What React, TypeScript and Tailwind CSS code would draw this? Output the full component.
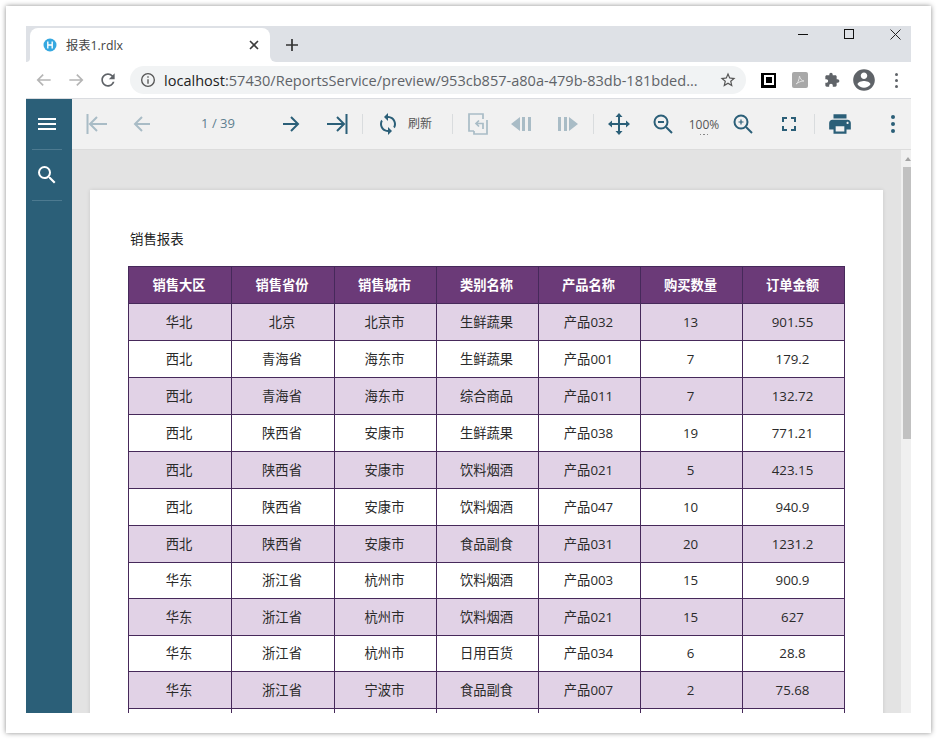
import React from "react";

const FONT = "font-['Open_Sans','Noto_Sans_CJK_SC',sans-serif]";

const head = ["销售大区", "销售省份", "销售城市", "类别名称", "产品名称", "购买数量", "订单金额"];
const rows: string[][] = [
  ["华北", "北京", "北京市", "生鲜蔬果", "产品032", "13", "901.55"],
  ["西北", "青海省", "海东市", "生鲜蔬果", "产品001", "7", "179.2"],
  ["西北", "青海省", "海东市", "综合商品", "产品011", "7", "132.72"],
  ["西北", "陕西省", "安康市", "生鲜蔬果", "产品038", "19", "771.21"],
  ["西北", "陕西省", "安康市", "饮料烟酒", "产品021", "5", "423.15"],
  ["西北", "陕西省", "安康市", "饮料烟酒", "产品047", "10", "940.9"],
  ["西北", "陕西省", "安康市", "食品副食", "产品031", "20", "1231.2"],
  ["华东", "浙江省", "杭州市", "饮料烟酒", "产品003", "15", "900.9"],
  ["华东", "浙江省", "杭州市", "饮料烟酒", "产品021", "15", "627"],
  ["华东", "浙江省", "杭州市", "日用百货", "产品034", "6", "28.8"],
  ["华东", "浙江省", "宁波市", "食品副食", "产品007", "2", "75.68"],
  ["", "", "", "", "", "", ""],
];
const short = [7, 9];

const Sep = () => <div className="w-px h-[20px] bg-[#d9dcde] shrink-0" />;
const Item = ({ className, children }: { className: string; children?: React.ReactNode }) => (
  <div className={`h-full flex items-center justify-center shrink-0 ${className}`}>{children}</div>
);
const Ln = ({ c, w = 2, d, s = 24 }: { c: string; w?: number; d: string; s?: number }) => (
  <svg width={s} height={s} viewBox="0 0 24 24" fill="none" stroke={c} strokeWidth={w}><path d={d} /></svg>
);
const Fl = ({ c, d, s = 24 }: { c: string; d: string; s?: number }) => (
  <svg width={s} height={s} viewBox="0 0 24 24" fill={c}><path d={d} /></svg>
);

const ON = "#2b5f78";
const OFF = "#a9bcc6";

export default function App() {
  return (
    <div className={`w-[937px] h-[739px] bg-white overflow-hidden pt-[6px] pl-[6px] ${FONT}`}>
      <div className="w-[925px] h-[727px] bg-white shadow-[0_0_5px_rgba(0,0,0,0.45)] p-[20px]">
        <div className="w-[885px] h-[687px] flex flex-col overflow-hidden">
          {/* tab strip */}
          <div className="h-[36px] bg-[#dee1e6] flex shrink-0">
            <div className="relative ml-[4px] mt-[2px] w-[240px] h-[34px] bg-white rounded-t-[8px] flex items-center pl-[13px] pr-[11px]">
              <div className="absolute left-[-4px] bottom-0 w-[4px] h-[6px] bg-white"><div className="w-full h-full bg-[#dee1e6] rounded-br-[4px]" /></div>
              <div className="absolute right-[-6px] bottom-0 w-[6px] h-[6px] bg-white"><div className="w-full h-full bg-[#dee1e6] rounded-bl-[6px]" /></div>
              <svg width="14" height="14" viewBox="0 0 14 14">
                <circle cx="7" cy="7" r="6.500" fill="#35a8e0" />
                <path d="M4.800 3.500v7M9.200 3.500v7M4.800 7h4.400" stroke="#fff" strokeWidth="1.400" fill="none" />
              </svg>
              <span className="ml-[9px] mt-[2px] text-[12.3px] text-[#444]">报表1.rdlx</span>
              <svg className="ml-auto" width="10" height="10" viewBox="0 0 10 10" stroke="#3c3c3c" strokeWidth="1.600"><path d="M1 1l8 8M9 1l-8 8" /></svg>
            </div>
            <div className="ml-[15px] w-[14px] h-full flex items-center justify-center pt-[2px]">
              <svg width="14" height="14" viewBox="0 0 14 14" stroke="#333" strokeWidth="1.700"><path d="M7 1v12M1 7h12" /></svg>
            </div>
            <div className="ml-auto h-[16px] flex items-center">
              <div className="mr-[36px] w-[10px] h-px bg-[#111]" />
              <div className="mr-[36px] w-[10px] h-[10px] border border-[#111]" />
              <svg className="mr-[10px]" width="11" height="11" viewBox="0 0 11 11" stroke="#222"><path d="M0.500 0.500l10 10M10.500 0.500l-10 10" /></svg>
            </div>
          </div>
          {/* address bar */}
          <div className="h-[37px] bg-white border-b border-[#dadce0] flex items-center shrink-0">
            <div className="ml-[8px]"><Ln c="#b5b5b5" s={20} d="M20 12H5M11 5.500L4.500 12l6.500 6.500" /></div>
            <div className="ml-[12px]"><Ln c="#b5b5b5" s={20} d="M4 12h15M13 5.500l6.500 6.500-6.500 6.500" /></div>
            <div className="ml-[12px]"><Fl c="#5f6368" s={20} d="M17.650 6.350C16.200 4.900 14.210 4 12 4c-4.420 0-7.990 3.580-7.990 8s3.570 8 7.990 8c3.730 0 6.840-2.550 7.730-6h-2.080c-.82 2.330-3.040 4-5.650 4-3.310 0-6-2.690-6-6s2.690-6 6-6c1.660 0 3.140.69 4.220 1.780L13 11h7V4l-2.350 2.350z" /></div>
            <div className="ml-[12px] w-[616px] h-[28px] rounded-full bg-[#f1f3f4] flex items-center pl-[10px] pr-[9px]">
              <svg width="16" height="16" viewBox="0 0 24 24" fill="none" stroke="#555" strokeWidth="2"><circle cx="12" cy="12" r="9.500" /><path d="M12 11v6.500M12 6.500v2.200" /></svg>
              <span className="ml-[8px] text-[14.55px] text-[#5f6368] whitespace-nowrap leading-none"><span className="text-[#222]">localhost</span>:57430/ReportsService/preview/953cb857-a80a-479b-83db-181bded...</span>
              <div className="ml-auto"><Fl c="#555" s={18} d="M22 9.240l-7.190-.62L12 2 9.190 8.630 2 9.240l5.460 4.730L5.820 21 12 17.270 18.180 21l-1.630-7.030L22 9.240zM12 15.400l-3.760 2.270 1-4.280-3.320-2.880 4.380-.38L12 6.100l1.710 4.040 4.380.38-3.320 2.880 1 4.280L12 15.400z" /></div>
            </div>
            <div className="ml-[15px] w-[15px] h-[15px] bg-black flex items-center justify-center"><div className="w-[10px] h-[10px] border-2 border-white bg-black" /></div>
            <div className="ml-[16px] w-[16px] h-[16px] rounded-[2px] bg-[#a8a8a8] flex items-center justify-center">
              <svg width="10" height="10" viewBox="0 0 10 10" fill="none" stroke="#e0e0e0"><path d="M1 9c2-1 3-4 3.500-8 .5 3 2 4.500 4.500 5-3 0-5 1-8 3z" /></svg>
            </div>
            <div className="ml-[16px]"><Fl c="#5f6368" s={16} d="M20.500 11H19V7c0-1.100-.9-2-2-2h-4V3.500C13 2.120 11.880 1 10.500 1S8 2.120 8 3.500V5H4c-1.100 0-1.990.9-1.990 2v3.800H3.500c1.490 0 2.700 1.210 2.700 2.700s-1.210 2.700-2.700 2.700H2V20c0 1.100.9 2 2 2h3.800v-1.500c0-1.490 1.210-2.700 2.700-2.700 1.490 0 2.700 1.210 2.700 2.700V22H17c1.100 0 2-.9 2-2v-4h1.500c1.380 0 2.500-1.120 2.500-2.500S21.880 11 20.500 11z" /></div>
            <div className="ml-[11px]"><Fl c="#5f6368" s={26} d="M12 2C6.480 2 2 6.480 2 12s4.480 10 10 10 10-4.480 10-10S17.520 2 12 2zm0 3c1.660 0 3 1.340 3 3s-1.340 3-3 3-3-1.340-3-3 1.340-3 3-3zm0 14.200c-2.500 0-4.710-1.280-6-3.220.03-1.990 4-3.080 6-3.080 1.990 0 5.970 1.090 6 3.080-1.290 1.940-3.500 3.220-6 3.220z" /></div>
            <div className="ml-[18px] flex flex-col gap-[3px]">
              <div className="w-[3px] h-[3px] rounded-full bg-[#5f6368]" />
              <div className="w-[3px] h-[3px] rounded-full bg-[#5f6368]" />
              <div className="w-[3px] h-[3px] rounded-full bg-[#5f6368]" />
            </div>
          </div>
          {/* app */}
          <div className="flex-1 flex min-h-0">
            <div className="w-[46px] bg-[#2b5f78] flex flex-col items-start pl-[6px] shrink-0">
              <div className="w-[30px] h-[51px] border-b border-[#4d7a90] flex items-center justify-center">
                <svg width="18" height="12" viewBox="0 0 18 12" stroke="#fff" strokeWidth="2"><path d="M0 1h18M0 6h18M0 11h18" /></svg>
              </div>
              <div className="w-[30px] h-[51px] border-b border-[#4d7a90] flex items-center justify-center">
                <Fl c="#fff" d="M15.500 14h-.79l-.28-.27A6.471 6.471 0 0 0 16 9.500 6.500 6.500 0 1 0 9.500 16c1.610 0 3.090-.59 4.230-1.570l.27.28v.79l5 4.990L20.490 19l-4.990-5zm-6 0C7.010 14 5 11.990 5 9.500S7.010 5 9.500 5 14 7.010 14 9.500 11.990 14 9.500 14z" />
              </div>
            </div>
            <div className="flex-1 flex flex-col min-w-0">
              {/* toolbar */}
              <div className="h-[51px] bg-[#f1f1f1] border-b border-[#dcdcdc] flex shrink-0 items-stretch">
                <Item className="w-[50px]"><svg width="22" height="20" viewBox="0 0 22 20" fill="none" stroke={OFF} strokeWidth="2"><path d="M1.500 0v20M21 10H4M11 3l-7 7 7 7" /></svg></Item>
                <Item className="w-[40px]"><Ln c={OFF} d="M20 12H5M12 5l-7 7 7 7" /></Item>
                <Item className="w-[112px] text-[13px] text-[#5e7f90]">1 / 39</Item>
                <Item className="w-[34px]"><Ln c={ON} d="M4 12h15M12 5l7 7-7 7" /></Item>
                <Item className="w-[46px] ml-[6px]"><svg width="22" height="20" viewBox="0 0 22 20" fill="none" stroke={ON} strokeWidth="2"><path d="M20.500 0v20M1 10h17M11 3l7 7-7 7" /></svg></Item>
                <div className="flex items-center ml-[2px]"><Sep /></div>
                <Item className="w-[34px] ml-[8px]"><Fl c={ON} d="M12 4V1L8 5l4 4V6c3.310 0 6 2.690 6 6 0 1.010-.25 1.970-.7 2.800l1.460 1.460C19.540 15.030 20 13.570 20 12c0-4.420-3.580-8-8-8zm0 14c-3.310 0-6-2.690-6-6 0-1.010.25-1.970.7-2.800L5.240 7.740C4.460 8.970 4 10.430 4 12c0 4.420 3.580 8 8 8v3l4-4-4-4v3z" /></Item>
                <Item className="w-[30px] text-[12px] text-[#555]">刷新</Item>
                <div className="flex items-center ml-[17px]"><Sep /></div>
                <Item className="w-[50px]">
                  <svg width="20" height="22" viewBox="0 0 20 22" fill="none" stroke={OFF} strokeWidth="1.700"><path d="M6 18H1V1h14v5" /><path d="M19 7v14H6v-3" /><path d="M8 10.500h7V16M11 7.500l-3 3 3 3" /></svg>
                </Item>
                <Item className="w-[38px]"><svg width="22" height="16" viewBox="0 0 22 16" fill={OFF}><path d="M9 1v14L0 8zM11 1h3v14h-3zM17 1h3v14h-3z" /></svg></Item>
                <Item className="w-[52px]"><svg width="22" height="16" viewBox="0 0 22 16" fill={OFF}><path d="M13 1v14l9-7zM2 1h3v14H2zM8 1h3v14H8z" /></svg></Item>
                <div className="flex items-center"><Sep /></div>
                <Item className="w-[50px]"><svg width="22" height="22" viewBox="0 0 22 22" fill={ON}><path d="M10 4H7.500L11 0l3.500 4H12v6h6V7.500l4 3.500-4 3.500V12h-6v6h2.500L11 22l-3.500-4H10v-6H4v2.500L0 11l4-3.500V10h6z" /></svg></Item>
                <Item className="w-[38px]"><svg width="20" height="20" viewBox="0 0 20 20" fill="none" stroke={ON} strokeWidth="2"><circle cx="8" cy="8" r="6.500" /><path d="M13 13l6 6M5 8h6" /></svg></Item>
                <Item className="w-[44px] flex-col text-[12px] text-[#555] leading-none pt-[6px]">
                  <span>100%</span>
                  <div className="flex gap-[2px] mt-[3px]">
                    <div className="w-[1.5px] h-[1.5px] bg-[#888]" />
                    <div className="w-[1.5px] h-[1.5px] bg-[#888]" />
                    <div className="w-[1.5px] h-[1.5px] bg-[#888]" />
                  </div>
                </Item>
                <Item className="w-[34px]"><svg width="20" height="20" viewBox="0 0 20 20" fill="none" stroke={ON} strokeWidth="2"><circle cx="8" cy="8" r="6.500" /><path d="M13 13l6 6" /><path d="M5.500 8h5M8 5.500v5" strokeWidth="1.200" /></svg></Item>
                <Item className="w-[42px] ml-[8px]"><svg width="14" height="14" viewBox="0 0 14 14" fill="none" stroke={ON} strokeWidth="2"><path d="M1 5V1h4M9 1h4v4M13 9v4H9M5 13H1V9" /></svg></Item>
                <div className="flex items-center ml-[4px]"><Sep /></div>
                <Item className="w-[50px]"><Fl c={ON} s={26} d="M19 8H5c-1.660 0-3 1.340-3 3v6h4v4h12v-4h4v-6c0-1.660-1.340-3-3-3zm-3 11H8v-5h8v5zm3-7c-.55 0-1-.45-1-1s.45-1 1-1 1 .45 1 1-.45 1-1 1zm-1-9H6v4h12V3z" /></Item>
                <Item className="w-[36px] ml-[10px] flex-col gap-[3px]">
                  <div className="w-[4px] h-[4px] rounded-full bg-[#2b5f78]" />
                  <div className="w-[4px] h-[4px] rounded-full bg-[#2b5f78]" />
                  <div className="w-[4px] h-[4px] rounded-full bg-[#2b5f78]" />
                </Item>
              </div>
              {/* viewer */}
              <div className="flex-1 flex min-h-0 bg-[#e3e3e3]">
                <div className="flex-1 min-w-0 overflow-hidden pl-[18px] pt-[40px]">
                  <div className="w-[793px] h-[600px] bg-white shadow-[0_0_4px_rgba(0,0,0,0.12)] pl-[38px] pt-[41px]">
                    <div className="pl-[2px] h-[16px] text-[13.4px] leading-[16px] text-[#222]">销售报表</div>
                    <table className="mt-[19px] border-collapse table-fixed w-[717px] text-[13.3px] text-center text-[#2a2a2a]">
                      <colgroup>
                        <col className="w-[103px]" /><col className="w-[103px]" /><col className="w-[102px]" /><col className="w-[102px]" /><col className="w-[102px]" /><col className="w-[102px]" /><col className="w-[102px]" />
                      </colgroup>
                      <thead>
                        <tr className="h-[37px] bg-[#6b3a78] text-white font-bold">
                          {head.map((h) => <th key={h} className="border border-[#46295a] p-0 pr-[2px] pt-[1px] font-bold">{h}</th>)}
                        </tr>
                      </thead>
                      <tbody>
                        {rows.map((r, i) => (
                          <tr key={i} className={`${short.includes(i) ? "h-[36px]" : "h-[37px]"} ${i % 2 === 0 ? "bg-[#e1d2e6]" : "bg-white"}`}>
                            {r.map((c, j) => <td key={j} className="border border-[#46295a] p-0 pr-[2px] pt-[1px]">{c}</td>)}
                          </tr>
                        ))}
                      </tbody>
                    </table>
                  </div>
                </div>
                <div className="w-[10px] bg-[#f0f0f0] shrink-0 flex flex-col items-end">
                  <div className="h-[17px] w-[8px] flex items-center justify-end">
                    <svg width="6" height="4" viewBox="0 0 6 4" fill="#a3a3a3"><path d="M3 0l3 4H0z" /></svg>
                  </div>
                  <div className="w-[8px] h-[272px] bg-[#c1c1c1]" />
                </div>
              </div>
            </div>
          </div>
        </div>
      </div>
    </div>
  );
}
